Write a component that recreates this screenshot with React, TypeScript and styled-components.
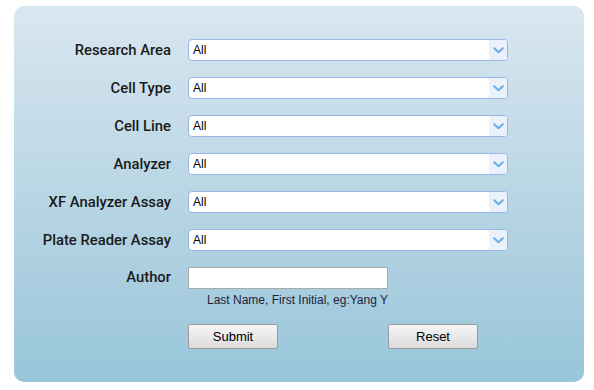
import React from 'react';
import styled, { createGlobalStyle } from 'styled-components';

const GlobalStyle = createGlobalStyle`
  * {
    box-sizing: border-box;
  }

  body {
    margin: 0;
    background: #ffffff;
    font-family: Roboto, 'Liberation Sans', sans-serif;
  }

  #root {
    padding: 6px 10px 8px 14px;
  }
`;

const Panel = styled.form`
  width: 570px;
  height: 376px;
  border-radius: 10px;
  background: linear-gradient(180deg, #d9e7f0 0%, #b9d6e4 50%, #98c5da 100%);
  padding-top: 33px;
`;

const FieldGrid = styled.div`
  display: grid;
  grid-template-columns: 157px 320px;
  column-gap: 17px;
  row-gap: 16px;
  align-items: center;
`;

const Label = styled.label<{ $top?: boolean }>`
  align-self: ${p => (p.$top ? 'start' : 'center')};
  text-align: right;
  font-size: 14.8px;
  font-weight: 500;
  color: #1a1a1a;
  line-height: 21px;
`;

const SelectWrap = styled.div`
  position: relative;
  width: 320px;
  height: 22px;
`;

const Select = styled.select`
  appearance: none;
  width: 100%;
  height: 100%;
  border: 1px solid #98b6e6;
  border-radius: 4px;
  background: #ffffff;
  padding: 0 0 0 4px;
  font-family: 'Liberation Sans', Arial, sans-serif;
  font-size: 12px;
  color: #000;
  outline: none;
`;

const ArrowBox = styled.span`
  position: absolute;
  top: 1px;
  right: 1px;
  bottom: 1px;
  width: 18px;
  background: #eaf1fa;
  border-radius: 0 3px 3px 0;
  display: flex;
  align-items: center;
  justify-content: center;
  pointer-events: none;
`;

const AuthorCell = styled.div`
  display: flex;
  flex-direction: column;
  align-items: flex-start;
`;

const TextInput = styled.input`
  width: 200px;
  height: 22px;
  border: 1px solid #a9a9a9;
  background: #ffffff;
  padding: 0 4px;
  font-family: 'Liberation Sans', Arial, sans-serif;
  font-size: 12px;
  outline: none;
`;

const Hint = styled.div`
  margin: 3px 0 0 19px;
  font-family: 'Liberation Sans', Arial, sans-serif;
  font-size: 12px;
  color: #1e1e3a;
  line-height: 16px;
`;

const ButtonRow = styled.div`
  display: flex;
  gap: 110px;
  margin: 16px 0 0 174px;
`;

const Button = styled.button`
  width: 90px;
  height: 25px;
  border: 1px solid #9a9a9a;
  border-radius: 2px;
  background: linear-gradient(180deg, #f5f5f5 0%, #e6e6e6 60%, #dcdcdc 100%);
  font-family: 'Liberation Sans', Arial, sans-serif;
  font-size: 13px;
  color: #000;
  padding: 0;
`;

const Chevron = () => (
  <svg width="11" height="7" viewBox="0 0 11 7">
    <path d="M1.2 1.2 L5.5 5.3 L9.8 1.2" fill="none" stroke="#6aaee8" strokeWidth="2" strokeLinecap="round" strokeLinejoin="round" />
  </svg>
);

const fields = [
  'Research Area',
  'Cell Type',
  'Cell Line',
  'Analyzer',
  'XF Analyzer Assay',
  'Plate Reader Assay',
];

export default function App() {
  return (
    <>
      <GlobalStyle />
      <Panel onSubmit={e => e.preventDefault()}>
        <FieldGrid>
          {fields.map(f => (
            <React.Fragment key={f}>
              <Label>{f}</Label>
              <SelectWrap>
                <Select defaultValue="All">
                  <option>All</option>
                </Select>
                <ArrowBox>
                  <Chevron />
                </ArrowBox>
              </SelectWrap>
            </React.Fragment>
          ))}
          <Label $top>Author</Label>
          <AuthorCell>
            <TextInput type="text" />
            <Hint>Last Name, First Initial, eg:Yang Y</Hint>
          </AuthorCell>
        </FieldGrid>
        <ButtonRow>
          <Button type="submit">Submit</Button>
          <Button type="reset">Reset</Button>
        </ButtonRow>
      </Panel>
    </>
  );
}
